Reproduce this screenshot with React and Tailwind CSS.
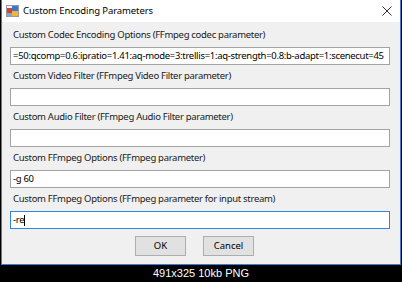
import React from 'react';

const fields = [
  {
    label: 'Custom Codec Encoding Options (FFmpeg codec parameter)',
    value: '=50:qcomp=0.6:ipratio=1.41:aq-mode=3:trellis=1:aq-strength=0.8:b-adapt=1:scenecut=45',
  },
  { label: 'Custom Video Filter (FFmpeg Video Filter parameter)', value: '' },
  { label: 'Custom Audio Filter (FFmpeg Audio Filter parameter)', value: '' },
  { label: 'Custom FFmpeg Options (FFmpeg parameter)', value: '-g 60' },
  { label: 'Custom FFmpeg Options (FFmpeg parameter for input stream)', value: '-re', focused: true },
];

const AppIcon = () => (
  <svg width="13" height="12" viewBox="0 0 13 12">
    <rect x="0.5" y="0.5" width="12" height="11" fill="#f4f4f4" stroke="#9a9a9a" />
    <rect x="1" y="3" width="5" height="5" fill="#d9412f" />
    <rect x="6" y="1" width="6" height="5" fill="#3b78d0" />
    <rect x="6" y="6" width="6" height="5" fill="#f2b632" />
    <rect x="1" y="8" width="5" height="3" fill="#7aa7e0" />
  </svg>
);

const CloseIcon = () => (
  <svg width="10" height="10" viewBox="0 0 10 10">
    <path d="M0.5 0.5 L9.5 9.5 M9.5 0.5 L0.5 9.5" stroke="#333" strokeWidth="1" />
  </svg>
);

export default function App() {
  return (
    <div className="w-[402px] h-[282px] bg-black flex flex-col" style={{ fontFamily: '"Noto Sans", "Open Sans", sans-serif' }}>
      {/* Dialog window */}
      <div className="ml-[1px] w-[400px] border-x border-b border-[#3a7fd0] bg-[#f0f0f0] flex flex-col">
        {/* Title bar */}
        <div className="h-[22px] bg-white flex items-center pl-[4px] pr-[8px]">
          <AppIcon />
          <span className="ml-[4px] text-[9.5px] tracking-[-0.1px] text-black leading-none">Custom Encoding Parameters</span>
          <div className="ml-auto flex items-center">
            <CloseIcon />
          </div>
        </div>

        {/* Fields */}
        <div className="pt-[6px] pl-[8px] flex flex-col gap-[4px]">
          {fields.map((f) => (
            <div key={f.label} className="flex flex-col">
              <div className="h-[14px] pl-[3px] text-[9.5px] tracking-[-0.3px] leading-[14px] text-[#1a1a1a] whitespace-nowrap">{f.label}</div>
              <div
                className={
                  f.focused
                    ? 'mt-[5px] w-[380px] h-[18px] bg-white border border-[#2f86dc] flex items-center pl-[2px] overflow-hidden'
                    : 'mt-[5px] w-[380px] h-[18px] bg-white border border-[#a3a3a3] flex items-center pl-[2px] overflow-hidden'
                }
              >
                <span className="text-[9.5px] tracking-[-0.3px] leading-none text-black whitespace-nowrap">{f.value}</span>
                {f.focused && <span className="w-[1px] h-[11px] bg-black" />}
              </div>
            </div>
          ))}
        </div>

        {/* Buttons */}
        <div className="pt-[7px] pb-[8px] pl-[133px] flex gap-[17px]">
          <button className="w-[51px] h-[20px] bg-[#e1e1e1] border border-[#adadad] text-[9.5px] text-black leading-none">OK</button>
          <button className="w-[51px] h-[20px] bg-[#e1e1e1] border border-[#adadad] text-[9.5px] text-black leading-none">Cancel</button>
        </div>
      </div>

      {/* Image caption */}
      <div className="flex-1 flex items-center justify-center">
        <span className="text-[11px] text-white leading-none" style={{ fontFamily: '"Liberation Sans", Arial, sans-serif' }}>
          491x325 10kb PNG
        </span>
      </div>
    </div>
  );
}
